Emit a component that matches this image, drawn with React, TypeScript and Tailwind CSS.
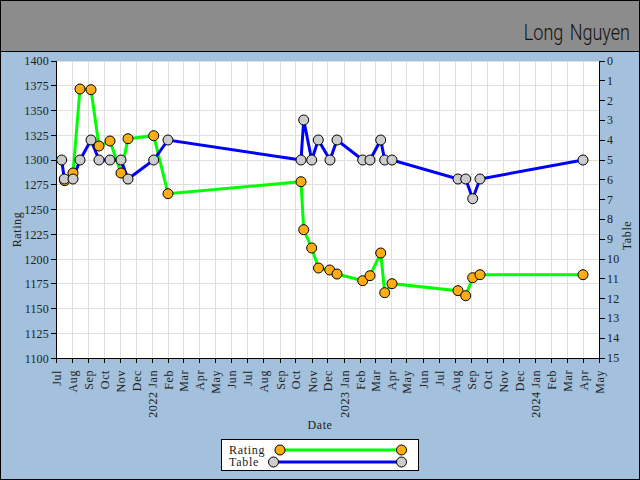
const serif = { fontFamily: '"Liberation Serif", serif' };

const ys = [61, 85.5, 110.5, 135.5, 160, 184.5, 209.5, 234.5, 259.5, 283.5, 308.5, 333.5, 358.5];
const yLabels = ["1400","1375","1350","1325","1300","1275","1250","1225","1200","1175","1150","1125","1100"];
const months: [number, string][] = [
  [56.5,"Jul"],[72.5,"Aug"],[88.5,"Sep"],[104.5,"Oct"],[120.5,"Nov"],[136.5,"Dec"],[152.5,"2022 Jan"],[168.5,"Feb"],[183.5,"Mar"],[199.5,"Apr"],[215.5,"May"],[231.5,"Jun"],[247.5,"Jul"],[263.5,"Aug"],[280.5,"Sep"],[295.5,"Oct"],[312.5,"Nov"],[327.5,"Dec"],[344.5,"2023 Jan"],[360.5,"Feb"],[375.5,"Mar"],[391.5,"Apr"],[406.5,"May"],[423.5,"Jun"],[439.5,"Jul"],[455.5,"Aug"],[471.5,"Sep"],[487.5,"Oct"],[503.5,"Nov"],[519.5,"Dec"],[535.5,"2024 Jan"],[551.5,"Feb"],[567.5,"Mar"],[583.5,"Apr"],[599.5,"May"],
];
const rating: [number, number][] = [[64.7,180.7],[73,173],[80,89],[91,89.7],[99,146],[110,141],[121,173],[128,138.7],[153.7,135.7],[168,193.7],[301,181.7],[303.7,229.7],[311.7,248],[318.5,268],[329.7,270],[337,274],[362.7,280.7],[370,275.7],[380.7,253],[384.7,292.7],[392,283.7],[458,290.7],[465.7,295.7],[472.7,277.7],[480,274.7],[583,274.7]];
const table: [number, number][] = [[61.7,160],[64.3,179],[73,179],[80,160],[91,140],[99,160],[110,160],[121,160],[128,179],[153.7,160],[168,140],[301,160],[303.7,120],[311.7,160],[318.3,140],[330,160],[337,140],[362.7,160],[370,160],[380.7,140],[384.7,160],[392,160],[458,179],[465.7,179],[472.7,198.7],[480,179],[583,160]];
const pts = (a: [number, number][]) => a.map((p) => p.join(",")).join(" ");
const tableTicks = Array.from({ length: 16 }, (_, i) => i);

function Marker({ x, y, fill }: { x: number; y: number; fill: string }) {
  return <circle cx={x} cy={y} r={5} fill={fill} stroke="#000" strokeWidth={1} />;
}

function LegendRow({ label, lineColor, fill, x1 }: { label: string; lineColor: string; fill: string; x1: number }) {
  return (
    <div className="flex items-center h-3">
      <span className="w-[38px] text-[12px] leading-3 tracking-[0.7px] text-[#222]" style={serif}>{label}</span>
      <svg width="146" height="12" viewBox="0 0 146 12">
        <line x1={x1} y1="6" x2="134.5" y2="6" stroke={lineColor} strokeWidth="3" />
        <Marker x={x1} y={6} fill={fill} />
        <Marker x={134.5} y={6} fill={fill} />
      </svg>
    </div>
  );
}

export default function App() {
  return (
    <div className="w-[640px] h-[480px] overflow-hidden border border-black bg-[#a3c1dc] flex flex-col">
      <header className="h-[51px] shrink-0 border-b border-black bg-[#8c8c8c] flex justify-end items-end pr-[9px] pb-[8px]">
        <span className="text-[18px] leading-[19px] font-light [word-spacing:2px] text-[#111] scale-y-[1.25] origin-[50%_75%]" style={{ fontFamily: 'Roboto, sans-serif' }}>Long Nguyen</span>
      </header>
      <svg width="638" height="387" viewBox="1 52 638 387" className="shrink-0" style={serif} fontSize="12" fill="#222">
        <rect x="57" y="61" width="542" height="297" fill="#fff" />
        <g stroke="#dfdfdf" strokeWidth="1" shapeRendering="crispEdges">
          <line x1="57" x2="599" y1="61.5" y2="61.5" />
          {ys.slice(1, -1).map((y) => <line key={y} x1="57" x2="599" y1={y} y2={y} />)}
          {months.slice(1, -1).map(([x]) => <line key={x} x1={x} x2={x} y1="61" y2="358" />)}
        </g>
        <g stroke="#000" strokeWidth="1" shapeRendering="crispEdges">
          <line x1="56.5" x2="56.5" y1="61" y2="359" />
          <line x1="599.5" x2="599.5" y1="61" y2="359" />
          <line x1="51" x2="605" y1="358.5" y2="358.5" />
          {ys.slice(0, -1).map((y) => <line key={y} x1="51" x2="57" y1={Math.floor(y) + 0.5} y2={Math.floor(y) + 0.5} />)}
          {months.map(([x]) => <line key={x} x1={x} x2={x} y1="358" y2="363" />)}
          {tableTicks.map((i) => <line key={i} x1="599" x2="605" y1={Math.floor(61 + i * 19.8) + 0.5} y2={Math.floor(61 + i * 19.8) + 0.5} />)}
        </g>
        <g letterSpacing="0.2">
          {yLabels.map((l, i) => <text key={l} x="49" y={ys[i] + 4} textAnchor="end">{l}</text>)}
          {tableTicks.map((i) => <text key={i} x="607" y={61 + i * 19.8 + 4}>{i}</text>)}
        </g>
        <g letterSpacing="0.6">
          {months.map(([x, l]) => (
            <text key={x} transform={`translate(${x + 4.5} 370) rotate(-90)`} textAnchor="end">{l}</text>
          ))}
          <text transform="translate(21 229.5) rotate(-90)" textAnchor="middle">Rating</text>
          <text transform="translate(631 235.5) rotate(-90)" textAnchor="middle">Table</text>
          <text x="320" y="429" textAnchor="middle">Date</text>
        </g>
        <polyline points={pts(rating)} fill="none" stroke="#00ff00" strokeWidth="3" />
        <polyline points={pts(table)} fill="none" stroke="#0000ff" strokeWidth="3" />
        {rating.map(([x, y], i) => <Marker key={i} x={x} y={y} fill="#ffad14" />)}
        {table.map(([x, y], i) => <Marker key={i} x={x} y={y} fill="#cccccc" />)}
      </svg>
      <div className="flex justify-center">
        <div className="w-[198px] h-[32px] border border-black bg-white flex flex-col justify-center pl-[7px] pt-[1px]">
          <LegendRow label="Rating" lineColor="#00ff00" fill="#ffad14" x1={13} />
          <LegendRow label="Table" lineColor="#0000ff" fill="#cccccc" x1={6.5} />
        </div>
      </div>
    </div>
  );
}
